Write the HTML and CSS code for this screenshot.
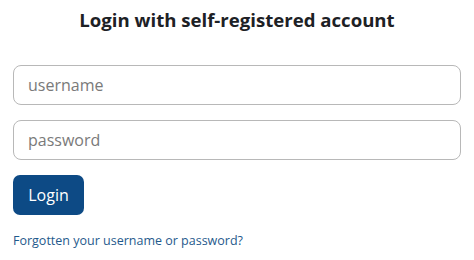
FILE: index.html
```html
<!DOCTYPE html>
<html lang="en">
<head>
<meta charset="utf-8">
<title>Login</title>
<link rel="stylesheet" href="styles.css">
</head>
<body>
<main class="login">
  <h2 class="login-title">Login with self-registered account</h2>
  <form class="login-form">
    <input class="field" type="text" placeholder="username">
    <input class="field" type="password" placeholder="password">
    <button class="btn-login" type="button">Login</button>
  </form>
  <a class="forgot" href="#">Forgotten your username or password?</a>
</main>
</body>
</html>
```
FILE: styles.css
```css
html, body {
  margin: 0;
  padding: 0;
  background: #ffffff;
}
body {
  font-family: "Open Sans", "Noto Sans", "Liberation Sans", sans-serif;
  color: #1d2125;
}
.login {
  padding: 7px 13px 0 13px;
  display: flex;
  flex-direction: column;
}
.login-title {
  margin: 0;
  font-size: 18.6px;
  font-weight: 700;
  line-height: 25px;
  text-align: center;
  color: #1d2125;
}
.login-form {
  margin-top: 33px;
  display: flex;
  flex-direction: column;
  align-items: flex-start;
  gap: 15px;
}
.field {
  box-sizing: border-box;
  width: 448px;
  height: 40px;
  border: 1px solid #b8b8b8;
  border-radius: 8px;
  padding: 0 14px;
  font-family: inherit;
  font-size: 16px;
  color: #333;
  background: #fff;
  outline: none;
}
.field::placeholder {
  color: #7a7a7a;
}
.btn-login {
  box-sizing: border-box;
  width: 71px;
  height: 40px;
  border: none;
  border-radius: 7px;
  background: #0d4a85;
  color: #ffffff;
  font-family: inherit;
  font-size: 16px;
  padding: 0;
}
.forgot {
  margin-top: 17px;
  font-size: 12.5px;
  line-height: 18px;
  color: #1f5a8c;
  text-decoration: none;
}
```
